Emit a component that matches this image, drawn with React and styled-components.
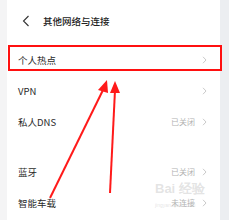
import styled, { createGlobalStyle } from 'styled-components';

const GlobalStyle = createGlobalStyle`
  html, body { margin: 0; padding: 0; }
  body {
    font-family: "Noto Sans CJK SC", "Noto Sans", "Liberation Sans", sans-serif;
    background: #f4f4f5;
  }
`;

const Page = styled.div`
  position: relative;
  display: flex;
  width: 229px;
  height: 220px;
  overflow: hidden;
  background: #f4f4f5;
`;

const Panel = styled.div`
  margin-left: 7px;
  width: 213px;
  background: #ffffff;
  display: flex;
  flex-direction: column;
`;

const Strip = styled.div`
  flex: 1;
  background: #eceef1;
`;

const Header = styled.div`
  height: 44px;
  display: flex;
  align-items: center;
  padding-left: 15px;
  gap: 13px;
  padding-bottom: 3px;
  box-sizing: border-box;
`;

const Title = styled.div`
  font-size: 9.5px;
  font-weight: 500;
  color: #222;
`;

const Row = styled.div`
  position: relative;
  height: 31px;
  display: flex;
  align-items: center;
  padding: 0 13px 0 11px;
  margin-top: ${(p) => p.$gap || 0}px;
  ${(p) =>
    p.$marked &&
    `
    &::after {
      content: "";
      position: absolute;
      left: 1px;
      right: -2px;
      top: 1px;
      height: 26px;
      border: 2px solid #ff1010;
      box-sizing: border-box;
    }
  `}
`;

const Label = styled.span`
  flex: 1;
  font-size: 9.5px;
  color: #2b2b2b;
`;

const Value = styled.span`
  font-size: 8px;
  color: #b3b3b3;
  margin-right: 7px;
`;

const Chevron = () => (
  <svg width="5" height="8" viewBox="0 0 5 8">
    <path d="M1 0.8 L4 4 L1 7.2" fill="none" stroke="#c4c4c4" strokeWidth="0.9" />
  </svg>
);

const Back = () => (
  <svg width="8" height="12" viewBox="0 0 8 12">
    <path d="M6.5 1 L1.5 6 L6.5 11" fill="none" stroke="#333" strokeWidth="1.1" />
  </svg>
);

const Watermark = styled.div`
  position: absolute;
  left: 155px;
  top: 182px;
  color: rgba(195, 195, 195, 0.45);
  font-family: "Liberation Sans", sans-serif;
  line-height: 1;
  span { display: block; }
  .big { font-size: 13px; font-weight: bold; }
  .small { font-size: 5px; margin-top: 8px; }
`;

const Arrows = styled.svg`
  position: absolute;
  left: 0;
  top: 0;
  pointer-events: none;
`;

export default function App() {
  return (
    <>
      <GlobalStyle />
      <Page>
        <Panel>
          <Header>
            <Back />
            <Title>其他网络与连接</Title>
          </Header>
          <Row $marked>
            <Label>个人热点</Label>
            <Chevron />
          </Row>
          <Row>
            <Label>VPN</Label>
            <Chevron />
          </Row>
          <Row>
            <Label>私人DNS</Label>
            <Value>已关闭</Value>
            <Chevron />
          </Row>
          <Row $gap={19}>
            <Label>蓝牙</Label>
            <Value>已关闭</Value>
            <Chevron />
          </Row>
          <Row>
            <Label>智能车载</Label>
            <Value>未连接</Value>
            <Chevron />
          </Row>
        </Panel>
        <Strip />
        <Watermark>
          <span className="big">Bai 经验</span>
          <span className="small">jingyan.baidu.com</span>
        </Watermark>
        <Arrows width="229" height="220" viewBox="0 0 229 220">
          <line x1="50" y1="198" x2="104" y2="88" stroke="#ff1a1a" strokeWidth="2" />
          <polygon points="107,80 98,90 108,93" fill="#ff1a1a" />
          <line x1="110" y1="193" x2="115" y2="90" stroke="#ff1a1a" strokeWidth="2" />
          <polygon points="115,81 110,93 120,93" fill="#ff1a1a" />
        </Arrows>
      </Page>
    </>
  );
}
